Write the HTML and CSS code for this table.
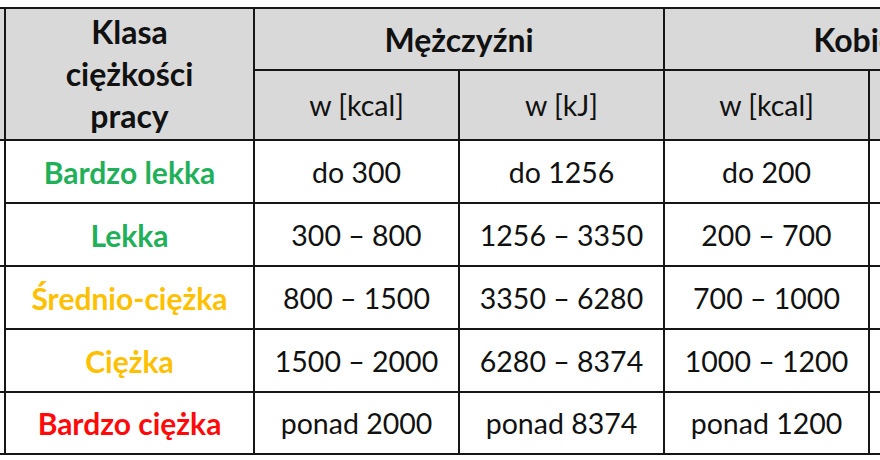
FILE: index.html
```html
<!DOCTYPE html>
<html lang="pl">
<head>
<meta charset="utf-8">
<title>Klasa ciężkości pracy</title>
<link rel="stylesheet" href="styles.css">
</head>
<body>
<div class="viewport">
  <div class="table">
    <div class="cell head lp-head"></div>
    <div class="cell head klasa">Klasa<br>ciężkości<br>pracy</div>
    <div class="cell head group men">Mężczyźni</div>
    <div class="cell head group women">Kobiety</div>
    <div class="cell head unit">w [kcal]</div>
    <div class="cell head unit">w [kJ]</div>
    <div class="cell head unit">w [kcal]</div>
    <div class="cell head unit">w [kJ]</div>

    <div class="cell lp lp-a"></div>
    <div class="cell name green">Bardzo lekka</div>
    <div class="cell">do 300</div>
    <div class="cell">do 1256</div>
    <div class="cell">do 200</div>
    <div class="cell">do 837</div>

    <div class="cell name green">Lekka</div>
    <div class="cell">300 – 800</div>
    <div class="cell">1256 – 3350</div>
    <div class="cell">200 – 700</div>
    <div class="cell">837 – 2931</div>

    <div class="cell lp lp-b"></div>
    <div class="cell name yellow">Średnio-ciężka</div>
    <div class="cell">800 – 1500</div>
    <div class="cell">3350 – 6280</div>
    <div class="cell">700 – 1000</div>
    <div class="cell">2931 – 4187</div>

    <div class="cell name yellow">Ciężka</div>
    <div class="cell">1500 – 2000</div>
    <div class="cell">6280 – 8374</div>
    <div class="cell">1000 – 1200</div>
    <div class="cell">4187 – 5024</div>

    <div class="cell lp lp-c"></div>
    <div class="cell name red">Bardzo ciężka</div>
    <div class="cell">ponad 2000</div>
    <div class="cell">ponad 8374</div>
    <div class="cell">ponad 1200</div>
    <div class="cell">ponad 5024</div>
  </div>
</div>
</body>
</html>
```

FILE: styles.css
```css
html, body {
  margin: 0;
  padding: 0;
  background: #ffffff;
}

.viewport {
  width: 880px;
  height: 460px;
  overflow: hidden;
  background: #ffffff;
}

.table {
  display: grid;
  grid-template-columns: 60px 247px 203px 203px 203px 203px;
  grid-template-rows: 60px 68px 61px 61px 61px 61px 60px;
  gap: 2px;
  padding: 2px;
  width: max-content;
  margin: 7px 0 0 -58px;
  background: #161616;
  font-family: Lato, "Open Sans", sans-serif;
  font-size: 28.5px;
  color: #111111;
}

.cell {
  display: flex;
  align-items: center;
  justify-content: center;
  text-align: center;
  background: #ffffff;
  white-space: nowrap;
}

.head {
  background: #d9d9d9;
}

.lp-head {
  grid-column: 1;
  grid-row: 1 / span 2;
}

.klasa {
  grid-column: 2;
  grid-row: 1 / span 2;
  font-weight: 700;
  font-size: 32px;
  line-height: 42px;
}

.group {
  font-weight: 700;
  font-size: 32px;
}

.men {
  grid-column: 3 / span 2;
  grid-row: 1;
}

.women {
  grid-column: 5 / span 2;
  grid-row: 1;
}

.lp {
  grid-column: 1;
}

.lp-a {
  grid-row: 3 / span 2;
}

.lp-b {
  grid-row: 5 / span 2;
}

.lp-c {
  grid-row: 7;
}

.name {
  font-weight: 700;
  font-size: 30px;
}

.green {
  color: #1fb059;
}

.yellow {
  color: #ffc000;
}

.red {
  color: #ff0a0a;
}
```
